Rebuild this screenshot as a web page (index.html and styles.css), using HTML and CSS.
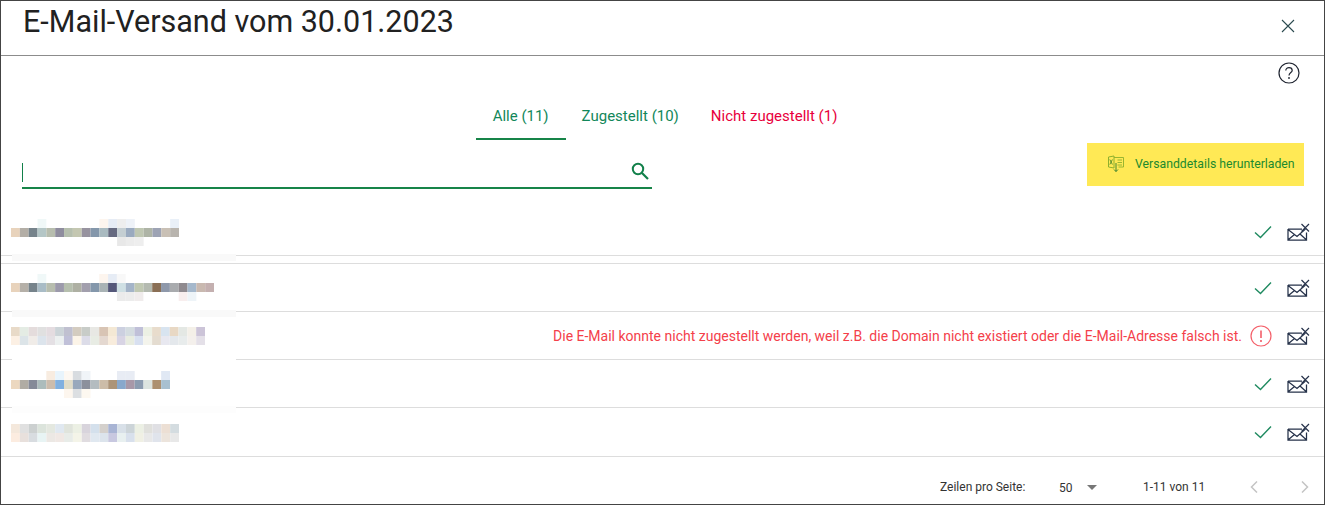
FILE: index.html
```html
<!DOCTYPE html>
<html lang="de">
<head>
  <meta charset="UTF-8" />
  <title>E-Mail-Versand</title>
  <link rel="stylesheet" href="styles.css">
</head>
<body>

  <svg class="sprites" width="0" height="0">
    <defs>
      <symbol id="check" viewBox="0 0 18 14">
        <path d="M1 7.5 L6.5 12.5 L17 1.5" fill="none" stroke="currentColor" stroke-width="1.4"/>
      </symbol>
      <symbol id="mail" viewBox="0 0 23 18">
        <path d="M1 6 H15 M19.5 9.5 V17 H1 V6 M1 6.5 L10 13.5 L18.5 6 M1.2 16.8 L7.5 11.5 M13 11 L19.3 16.8" fill="none" stroke="#26324a" stroke-width="1.25"/>
        <path d="M14.5 1 L22 8.5 M22 1 L14.5 8.5" fill="none" stroke="#26324a" stroke-width="1.2"/>
      </symbol>
    </defs>
  </svg>

  <div class="dialog">

    <header class="dialog-head">
      <h1>E-Mail-Versand vom 30.01.2023</h1>
      <svg class="close" viewBox="0 0 14 14"><path d="M1 1 L13 13 M13 1 L1 13" fill="none" stroke="#2b4a4f" stroke-width="1.1"/></svg>
    </header>

    <div class="help-row">
      <svg class="help" viewBox="0 0 22 22">
        <circle cx="11" cy="11" r="10" fill="none" stroke="#1f2430" stroke-width="1.2"/>
        <path d="M7.8 8.6 C7.8 6.6 9.2 5.6 11 5.6 C12.9 5.6 14.2 6.8 14.2 8.4 C14.2 10.4 11 10.6 11 13.4" fill="none" stroke="#1f2430" stroke-width="1.2"/>
        <circle cx="11" cy="16" r="0.9" fill="#1f2430"/>
      </svg>
    </div>

    <nav class="tabs">
      <a class="tab tab-active">Alle (11)</a>
      <a class="tab">Zugestellt (10)</a>
      <a class="tab tab-red">Nicht zugestellt (1)</a>
    </nav>

    <div class="toolbar">
      <div class="search">
        <span class="caret"></span>
        <svg class="search-icon" viewBox="0 0 18 18">
          <circle cx="7" cy="7" r="5.2" fill="none" stroke="#12804a" stroke-width="2"/>
          <path d="M11 11 L17 17" stroke="#12804a" stroke-width="2.2"/>
        </svg>
      </div>
      <button class="download">
        <svg class="xls" viewBox="0 0 16 17">
          <path d="M6 1 L0.5 2 V12 L6 13 Z" fill="none" stroke="#8fb02c" stroke-width="1"/>
          <path d="M6 2.5 H15.5 V12 H10.5 M9.5 5 H14 M9.5 7.5 H14 M9.5 10 H14" fill="none" stroke="#8fb02c" stroke-width="0.9"/>
          <path d="M1.8 4.5 L4.4 9.5 M4.4 4.5 L1.8 9.5" stroke="#4f8a2a" stroke-width="0.9"/>
          <path d="M8 8 V16.5 M6 14.5 L8 16.5 L10 14.5" fill="none" stroke="#2c7a2c" stroke-width="0.9"/>
        </svg>
        Versanddetails herunterladen
      </button>
    </div>

    <ul class="rows">
      <li class="row row-first">
        <svg class="blur blur-low" width="168" height="27" viewBox="0 0 171 27" preserveAspectRatio="none">
          <rect x="27" y="0" width="9" height="9" fill="#f0f8f8"/><rect x="90" y="0" width="9" height="9" fill="#fdf5ee"/><rect x="99" y="0" width="9" height="9" fill="#e6ecf5"/><rect x="108" y="0" width="9" height="9" fill="#eeeeee"/><rect x="117" y="0" width="9" height="9" fill="#eef2f8"/><rect x="162" y="0" width="9" height="9" fill="#e9f0f8"/>
          <rect x="0" y="9" width="9" height="9" fill="#e8d3bc"/><rect x="9" y="9" width="9" height="9" fill="#b3aea6"/><rect x="18" y="9" width="9" height="9" fill="#76838b"/><rect x="27" y="9" width="9" height="9" fill="#b4c6c6"/><rect x="36" y="9" width="9" height="9" fill="#b7bdae"/><rect x="45" y="9" width="9" height="9" fill="#8f8d9e"/><rect x="54" y="9" width="9" height="9" fill="#b6bfae"/><rect x="63" y="9" width="9" height="9" fill="#c4c7b1"/><rect x="72" y="9" width="9" height="9" fill="#97939f"/><rect x="81" y="9" width="9" height="9" fill="#8497ab"/><rect x="90" y="9" width="9" height="9" fill="#a9bac0"/><rect x="99" y="9" width="9" height="9" fill="#666a80"/><rect x="108" y="9" width="9" height="9" fill="#c4ced2"/><rect x="117" y="9" width="9" height="9" fill="#9aaabf"/><rect x="126" y="9" width="9" height="9" fill="#bfc7b2"/><rect x="135" y="9" width="9" height="9" fill="#aeb4a6"/><rect x="144" y="9" width="9" height="9" fill="#9da3b4"/><rect x="153" y="9" width="9" height="9" fill="#c9c0b5"/><rect x="162" y="9" width="9" height="9" fill="#b8b4ae"/>
          <rect x="108" y="18" width="9" height="9" fill="#e8e8e8"/><rect x="117" y="18" width="9" height="9" fill="#ececec"/><rect x="126" y="18" width="9" height="9" fill="#eeeeee"/>
        </svg>
        <svg class="ok"><use href="#check"/></svg>
        <svg class="mail"><use href="#mail"/></svg>
        <span class="patch"></span>
      </li>
      <li class="row">
        <svg class="blur" width="203" height="27" viewBox="0 0 207 27" preserveAspectRatio="none">
          <rect x="27" y="0" width="9" height="9" fill="#f0f8f8"/><rect x="90" y="0" width="9" height="9" fill="#fdf5ee"/><rect x="99" y="0" width="9" height="9" fill="#e6ecf5"/><rect x="108" y="0" width="9" height="9" fill="#f8f8f8"/>
          <rect x="0" y="9" width="9" height="9" fill="#e8d3bc"/><rect x="9" y="9" width="9" height="9" fill="#b5b0a8"/><rect x="18" y="9" width="9" height="9" fill="#76838b"/><rect x="27" y="9" width="9" height="9" fill="#a9bcc6"/><rect x="36" y="9" width="9" height="9" fill="#b7bdae"/><rect x="45" y="9" width="9" height="9" fill="#9c9aab"/><rect x="54" y="9" width="9" height="9" fill="#b6bfae"/><rect x="63" y="9" width="9" height="9" fill="#aeb0a3"/><rect x="72" y="9" width="9" height="9" fill="#a29fad"/><rect x="81" y="9" width="9" height="9" fill="#8497ab"/><rect x="90" y="9" width="9" height="9" fill="#a9b3b5"/><rect x="99" y="9" width="9" height="9" fill="#55587a"/><rect x="108" y="9" width="9" height="9" fill="#cfe0e4"/><rect x="117" y="9" width="9" height="9" fill="#a4b4c8"/><rect x="126" y="9" width="9" height="9" fill="#c0c8b2"/><rect x="135" y="9" width="9" height="9" fill="#b4bab0"/><rect x="144" y="9" width="9" height="9" fill="#8a6f55"/><rect x="153" y="9" width="9" height="9" fill="#8e98aa"/><rect x="162" y="9" width="9" height="9" fill="#a9abae"/><rect x="171" y="9" width="9" height="9" fill="#8f8a8f"/><rect x="180" y="9" width="9" height="9" fill="#a5b8cc"/><rect x="189" y="9" width="9" height="9" fill="#c9b9b0"/><rect x="198" y="9" width="9" height="9" fill="#c4b0b0"/>
          <rect x="108" y="18" width="9" height="9" fill="#ebebeb"/><rect x="117" y="18" width="9" height="9" fill="#ececec"/><rect x="126" y="18" width="9" height="9" fill="#f0ecec"/><rect x="171" y="18" width="9" height="9" fill="#f8eeee"/><rect x="180" y="18" width="9" height="9" fill="#eef4f8"/>
        </svg>
        <svg class="ok"><use href="#check"/></svg>
        <svg class="mail"><use href="#mail"/></svg>
        <span class="patch"></span>
      </li>
      <li class="row">
        <svg class="blur" width="194" height="18" viewBox="0 0 198 18" preserveAspectRatio="none">
          <rect x="0" y="0" width="9" height="9" fill="#e8dac8"/><rect x="9" y="0" width="9" height="9" fill="#e4ece4"/><rect x="18" y="0" width="9" height="9" fill="#e4dcdc"/><rect x="27" y="0" width="9" height="9" fill="#e0e0e0"/><rect x="36" y="0" width="9" height="9" fill="#e4dce0"/><rect x="45" y="0" width="9" height="9" fill="#ccd4d8"/><rect x="54" y="0" width="9" height="9" fill="#c0c0d0"/><rect x="63" y="0" width="9" height="9" fill="#d4ccc0"/><rect x="72" y="0" width="9" height="9" fill="#c8ccc8"/><rect x="81" y="0" width="9" height="9" fill="#e8e8e4"/><rect x="90" y="0" width="9" height="9" fill="#d8c4b4"/><rect x="99" y="0" width="9" height="9" fill="#f4e8d4"/><rect x="108" y="0" width="9" height="9" fill="#ccd0e0"/><rect x="117" y="0" width="9" height="9" fill="#d4dce0"/><rect x="126" y="0" width="9" height="9" fill="#c0c0d8"/><rect x="135" y="0" width="9" height="9" fill="#ecf0e4"/><rect x="144" y="0" width="9" height="9" fill="#e8dccc"/><rect x="153" y="0" width="9" height="9" fill="#d8e4f0"/><rect x="162" y="0" width="9" height="9" fill="#e8d8c4"/><rect x="171" y="0" width="9" height="9" fill="#e4e8e4"/><rect x="180" y="0" width="9" height="9" fill="#f4f0e8"/><rect x="189" y="0" width="9" height="9" fill="#ccc4d8"/>
          <rect x="0" y="9" width="9" height="9" fill="#fcf0e4"/><rect x="9" y="9" width="9" height="9" fill="#dce4e8"/><rect x="18" y="9" width="9" height="9" fill="#f0ece8"/><rect x="27" y="9" width="9" height="9" fill="#dce4ec"/><rect x="36" y="9" width="9" height="9" fill="#e4e0e4"/><rect x="45" y="9" width="9" height="9" fill="#ecf0f0"/><rect x="54" y="9" width="9" height="9" fill="#c0c0d8"/><rect x="63" y="9" width="9" height="9" fill="#fcf4e8"/><rect x="72" y="9" width="9" height="9" fill="#dcdce8"/><rect x="81" y="9" width="9" height="9" fill="#e8ece4"/><rect x="90" y="9" width="9" height="9" fill="#e4d8d0"/><rect x="99" y="9" width="9" height="9" fill="#f8ecdc"/><rect x="108" y="9" width="9" height="9" fill="#d8d4e4"/><rect x="117" y="9" width="9" height="9" fill="#e8ece0"/><rect x="126" y="9" width="9" height="9" fill="#d8e0f0"/><rect x="135" y="9" width="9" height="9" fill="#f4f4ec"/><rect x="144" y="9" width="9" height="9" fill="#e4dcd0"/><rect x="153" y="9" width="9" height="9" fill="#e8e8f0"/><rect x="162" y="9" width="9" height="9" fill="#e4e8ec"/><rect x="171" y="9" width="9" height="9" fill="#e8ecec"/><rect x="180" y="9" width="9" height="9" fill="#f4f0ec"/><rect x="189" y="9" width="9" height="9" fill="#e4e0e8"/>
        </svg>
        <span class="error-text">Die E-Mail konnte nicht zugestellt werden, weil z.B. die Domain nicht existiert oder die E-Mail-Adresse falsch ist.</span>
        <svg class="alert" viewBox="0 0 22 22">
          <circle cx="11" cy="11" r="10" fill="none" stroke="#f4606a" stroke-width="1.2"/>
          <path d="M11 5.5 V13" stroke="#f03a48" stroke-width="1.3"/>
          <circle cx="11" cy="16" r="0.9" fill="#f03a48"/>
        </svg>
        <svg class="mail"><use href="#mail"/></svg>
        <span class="patch patch-white"></span>
      </li>
      <li class="row">
        <svg class="blur blur-low" width="159" height="27" viewBox="0 0 162 27" preserveAspectRatio="none">
          <rect x="36" y="0" width="9" height="9" fill="#f8ece0"/><rect x="45" y="0" width="9" height="9" fill="#e8f4fc"/><rect x="54" y="0" width="9" height="9" fill="#fdf8f2"/><rect x="63" y="0" width="9" height="9" fill="#d8dce0"/><rect x="72" y="0" width="9" height="9" fill="#f0f4f8"/><rect x="108" y="0" width="9" height="9" fill="#e8ecf4"/><rect x="117" y="0" width="9" height="9" fill="#e8ecf4"/><rect x="153" y="0" width="9" height="9" fill="#e0e8f4"/>
          <rect x="0" y="9" width="9" height="9" fill="#ecd8c0"/><rect x="9" y="9" width="9" height="9" fill="#b0aca4"/><rect x="18" y="9" width="9" height="9" fill="#858a98"/><rect x="27" y="9" width="9" height="9" fill="#acbcbc"/><rect x="36" y="9" width="9" height="9" fill="#ccbcac"/><rect x="45" y="9" width="9" height="9" fill="#80b0e0"/><rect x="54" y="9" width="9" height="9" fill="#e0dcc8"/><rect x="63" y="9" width="9" height="9" fill="#98a8bc"/><rect x="72" y="9" width="9" height="9" fill="#8c909c"/><rect x="81" y="9" width="9" height="9" fill="#b4bcc0"/><rect x="90" y="9" width="9" height="9" fill="#ccbca8"/><rect x="99" y="9" width="9" height="9" fill="#ac9478"/><rect x="108" y="9" width="9" height="9" fill="#88a8cc"/><rect x="117" y="9" width="9" height="9" fill="#a898a8"/><rect x="126" y="9" width="9" height="9" fill="#8c9cb0"/><rect x="135" y="9" width="9" height="9" fill="#dce4e0"/><rect x="144" y="9" width="9" height="9" fill="#ac9070"/><rect x="153" y="9" width="9" height="9" fill="#a8c0d0"/>
          <rect x="54" y="18" width="9" height="9" fill="#fdf6ee"/><rect x="63" y="18" width="9" height="9" fill="#dcdfe2"/><rect x="72" y="18" width="9" height="9" fill="#fdf8f0"/>
        </svg>
        <svg class="ok"><use href="#check"/></svg>
        <svg class="mail"><use href="#mail"/></svg>
        <span class="patch patch-light"></span>
      </li>
      <li class="row">
        <svg class="blur blur-low" width="168" height="18" viewBox="0 0 171 18" preserveAspectRatio="none">
          <rect x="0" y="0" width="9" height="9" fill="#f4e8dc"/><rect x="9" y="0" width="9" height="9" fill="#e0e0e0"/><rect x="18" y="0" width="9" height="9" fill="#ccd0d0"/><rect x="27" y="0" width="9" height="9" fill="#dce4dc"/><rect x="36" y="0" width="9" height="9" fill="#e4e8e0"/><rect x="45" y="0" width="9" height="9" fill="#e0e8f0"/><rect x="54" y="0" width="9" height="9" fill="#e0e4dc"/><rect x="63" y="0" width="9" height="9" fill="#ecf0e4"/><rect x="72" y="0" width="9" height="9" fill="#d8d4dc"/><rect x="81" y="0" width="9" height="9" fill="#d4e0ec"/><rect x="90" y="0" width="9" height="9" fill="#d4d0cc"/><rect x="99" y="0" width="9" height="9" fill="#a8b4d4"/><rect x="108" y="0" width="9" height="9" fill="#d8e0e8"/><rect x="117" y="0" width="9" height="9" fill="#ccd4d8"/><rect x="126" y="0" width="9" height="9" fill="#ecf0e4"/><rect x="135" y="0" width="9" height="9" fill="#e0e0dc"/><rect x="144" y="0" width="9" height="9" fill="#e0e0e4"/><rect x="153" y="0" width="9" height="9" fill="#ecdfd4"/><rect x="162" y="0" width="9" height="9" fill="#d4dce0"/>
          <rect x="0" y="9" width="9" height="9" fill="#fcece0"/><rect x="9" y="9" width="9" height="9" fill="#e8e0dc"/><rect x="18" y="9" width="9" height="9" fill="#d8dce0"/><rect x="27" y="9" width="9" height="9" fill="#e8f4f4"/><rect x="36" y="9" width="9" height="9" fill="#ece8e4"/><rect x="45" y="9" width="9" height="9" fill="#f0e8e4"/><rect x="54" y="9" width="9" height="9" fill="#e8ece8"/><rect x="63" y="9" width="9" height="9" fill="#f4f4e8"/><rect x="72" y="9" width="9" height="9" fill="#e0dce0"/><rect x="81" y="9" width="9" height="9" fill="#e0e8f0"/><rect x="90" y="9" width="9" height="9" fill="#dce4ec"/><rect x="99" y="9" width="9" height="9" fill="#c8c8e0"/><rect x="108" y="9" width="9" height="9" fill="#e8f0f0"/><rect x="117" y="9" width="9" height="9" fill="#d8e0ec"/><rect x="126" y="9" width="9" height="9" fill="#f0f0e4"/><rect x="135" y="9" width="9" height="9" fill="#e8e8e8"/><rect x="144" y="9" width="9" height="9" fill="#e0e4ec"/><rect x="153" y="9" width="9" height="9" fill="#ece4dc"/><rect x="162" y="9" width="9" height="9" fill="#e8e8e8"/>
        </svg>
        <svg class="ok"><use href="#check"/></svg>
        <svg class="mail"><use href="#mail"/></svg>
      </li>
    </ul>

    <footer class="pager">
      <span class="pager-label">Zeilen pro Seite:</span>
      <span class="pager-size">50</span>
      <span class="pager-arrow"></span>
      <span class="pager-range">1-11 von 11</span>
      <svg class="chev chev-prev" viewBox="0 0 8 12"><path d="M7 0.5 L1.5 6 L7 11.5" fill="none" stroke="#c4c4c4" stroke-width="1.5"/></svg>
      <svg class="chev chev-next" viewBox="0 0 8 12"><path d="M1 0.5 L6.5 6 L1 11.5" fill="none" stroke="#c4c4c4" stroke-width="1.5"/></svg>
    </footer>

  </div>

</body>
</html>
```

FILE: styles.css
```css
html, body {
  margin: 0;
  padding: 0;
  height: 100%;
  background: #fff;
  overflow: hidden;
  font-family: Roboto, 'Liberation Sans', sans-serif;
}

.sprites {
  position: absolute;
}

.dialog {
  width: 1325px;
  height: 505px;
  box-sizing: border-box;
  border: 1px solid #444;
  background: #fff;
}

.dialog-head {
  display: flex;
  justify-content: space-between;
  align-items: center;
  height: 54px;
  border-bottom: 1px solid #8c8c8c;
  padding: 0 29px 0 22px;
}

.dialog-head h1 {
  margin: 0 0 12px;
  font-size: 30.5px;
  font-weight: 400;
  line-height: 42px;
  color: #212121;
}

.close {
  width: 14px;
  height: 14px;
  margin-top: -5px;
}

.help-row {
  display: flex;
  justify-content: flex-end;
  padding: 6px 24px 0 0;
  height: 22px;
}

.help {
  width: 22px;
  height: 22px;
}

/* Tabs */
.tabs {
  display: flex;
  justify-content: center;
  margin-top: 16px;
  padding-left: 4px;
}

.tab {
  padding: 0 16px;
  height: 40px;
  line-height: 32px;
  box-sizing: border-box;
  font-size: 15px;
  color: #12875a;
}

.tab-active {
  border-bottom: 2px solid #178448;
  padding-left: 17px;
  padding-right: 17px;
}

.tab-red {
  color: #e8003c;
}

/* Search and download */
.toolbar {
  display: flex;
  justify-content: space-between;
  align-items: flex-start;
  padding: 3px 20px 0 21px;
  height: 68px;
  box-sizing: border-box;
}

.search {
  display: flex;
  justify-content: space-between;
  align-items: center;
  width: 630px;
  height: 46px;
  box-sizing: border-box;
  border-bottom: 2px solid #178448;
  padding: 12px 3px 0 0;
}

.caret {
  width: 1px;
  height: 19px;
  margin-top: 2px;
  background: #12804a;
}

.search-icon {
  width: 18px;
  height: 18px;
}

.download {
  display: flex;
  align-items: center;
  gap: 11px;
  width: 217px;
  height: 43px;
  padding: 0 0 2px 21px;
  border: none;
  background: #ffe955;
  font-family: inherit;
  font-size: 12.25px;
  color: #1c8a2e;
}

.xls {
  width: 16px;
  height: 17px;
}

/* Rows */
.rows {
  list-style: none;
  margin: 0;
  padding: 0;
}

.row {
  position: relative;
  display: flex;
  align-items: center;
  height: 47px;
  padding: 0 14px 0 10px;
  border-bottom: 1px solid #ddd;
}

.row-first {
  margin-bottom: 7px;
}

.row:nth-child(2) {
  border-top: 1px solid #ddd;
}

.row:last-child {
  height: 48px;
}

.blur {
  display: block;
  margin-right: auto;
}

.blur-low {
  margin-top: 2px;
}

.ok {
  width: 18px;
  height: 14px;
  margin-right: 15px;
  color: #1f8a60;
}

.mail {
  width: 23px;
  height: 18px;
}

.error-text {
  margin-right: 8px;
  font-size: 14px;
  color: #f4404a;
}

.alert {
  width: 22px;
  height: 22px;
  margin-right: 15px;
}

/* faint leftovers of the blurred area lying over the row lines */
.patch {
  position: absolute;
  left: 11px;
  top: 100%;
  width: 224px;
  height: 7px;
  margin-top: -1px;
  background: #f9f9f9;
}

.patch-white {
  background: #fff;
  height: 3px;
}

.patch-light {
  background: #fdfdfd;
}

/* Footer */
.pager {
  display: flex;
  align-items: center;
  height: 47px;
  padding: 13px 0 0 939px;
  box-sizing: border-box;
  font-size: 12px;
  color: #333;
}

.pager-label {
  width: 119px;
}

.pager-size {
  width: 28px;
  margin-top: 2px;
}

.pager-arrow {
  width: 0;
  height: 0;
  border-left: 5.5px solid transparent;
  border-right: 5.5px solid transparent;
  border-top: 5px solid #777;
  margin-right: 46px;
}

.pager-range {
  width: 61px;
  white-space: nowrap;
}

.chev {
  width: 8px;
  height: 12px;
}

.chev-prev {
  margin-left: 46px;
}

.chev-next {
  margin-left: 43px;
}
```
